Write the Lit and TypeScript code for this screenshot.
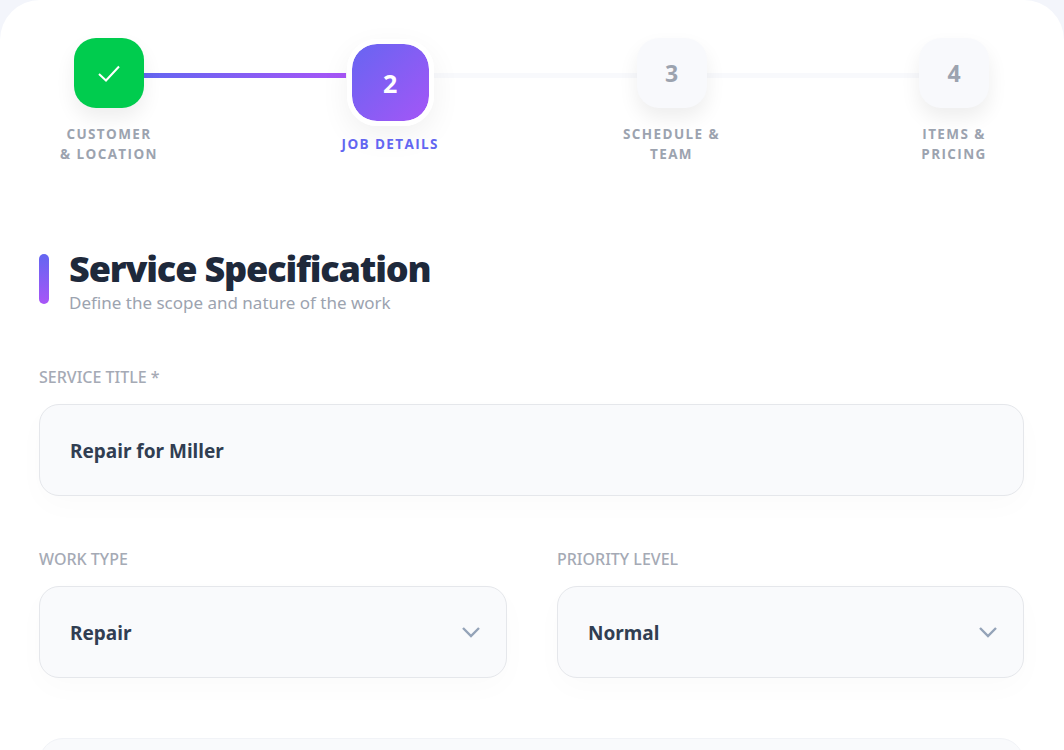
import { html, css, LitElement } from "lit";
import { customElement } from "lit/decorators.js";

const steps = [
  { label: ["Customer", "& Location"], state: "done", num: "" },
  { label: ["Job Details"], state: "active", num: "2" },
  { label: ["Schedule &", "Team"], state: "", num: "3" },
  { label: ["Items &", "Pricing"], state: "", num: "4" },
];

@customElement("app-root")
export class AppRoot extends LitElement {
  static styles = css`
    :host {
      display: block;
      height: 750px;
      overflow: hidden;
      background: #f3f5fb;
      font-family: "Noto Sans", sans-serif;
    }
    .card {
      background: #fff;
      border-radius: 40px 40px 0 0;
      height: 750px;
      box-sizing: border-box;
      padding: 38px 40px 0 39px;
    }

    /* stepper */
    .stepper {
      position: relative;
      display: flex;
      gap: 183.25px;
      margin: 0 21px;
      font-family: "Open Sans", sans-serif;
    }
    .track {
      position: absolute;
      left: 49px;
      right: 49px;
      top: 35px;
      height: 5px;
      background: #f8f9fc;
    }
    .progress {
      position: absolute;
      left: 84px;
      width: 202px;
      top: 35px;
      height: 5px;
      background: linear-gradient(90deg, #6366f1, #a855f7);
    }
    .step {
      position: relative;
      width: 98px;
      display: flex;
      flex-direction: column;
      align-items: center;
    }
    .step:last-child {
      margin-left: 1.25px;
    }
    .dot {
      width: 70px;
      height: 70px;
      border-radius: 22px;
      background: #f8f9fc;
      color: #9ca3af;
      font-size: 23px;
      font-weight: 700;
      display: flex;
      align-items: center;
      justify-content: center;
      box-shadow: 0 10px 20px rgba(0, 0, 0, 0.07);
    }
    .done .dot {
      background: #00cc4e;
    }
    .active .dot {
      width: 77px;
      height: 77px;
      margin-top: 1px;
      border: 5.5px solid #fff;
      border-radius: 30px;
      background: linear-gradient(135deg, #6366f1, #a855f7);
      background-origin: border-box;
      background-clip: padding-box;
      color: #fff;
      font-size: 25px;
      box-shadow: 0 10px 30px rgba(0, 0, 0, 0.06);
    }
    .step-label {
      margin-top: 16px;
      font-size: 13.5px;
      line-height: 20px;
      font-weight: 700;
      letter-spacing: 1.4px;
      text-transform: uppercase;
      text-align: center;
      white-space: nowrap;
      color: #9ca3af;
    }
    .active .step-label {
      margin-top: 8px;
      color: #6366f1;
    }

    /* section header */
    .section {
      display: flex;
      align-items: flex-start;
      gap: 20px;
      margin-top: 85px;
    }
    .bar {
      width: 10px;
      height: 50px;
      margin-top: 5px;
      border-radius: 5px;
      background: linear-gradient(180deg, #6366f1, #a855f7);
    }
    h2 {
      margin: 0;
      font-family: "Open Sans", sans-serif;
      font-size: 36px;
      line-height: 40px;
      font-weight: 800;
      letter-spacing: -1.15px;
      color: #1e293b;
    }
    .sub {
      margin-top: 2px;
      font-size: 17px;
      line-height: 24px;
      color: #9ca3af;
    }

    /* fields */
    .field-label {
      font-size: 16px;
      line-height: 20px;
      font-weight: 500;
      color: #a5aab5;
      text-transform: uppercase;
      margin-bottom: 17px;
    }
    .box {
      height: 92px;
      box-sizing: border-box;
      display: flex;
      align-items: center;
      justify-content: space-between;
      padding: 0 25px 0 30px;
      background: #f9fafc;
      border: 1px solid #e5e7eb;
      border-radius: 20px;
      font-size: 19px;
      line-height: 28px;
      font-weight: 700;
      color: #313e52;
      box-shadow: 0 10px 30px rgba(0, 0, 0, 0.02);
    }
    .value {
      padding-top: 2px;
    }
    .first {
      margin-top: 52px;
    }
    .row {
      display: grid;
      grid-template-columns: 468px 467px;
      gap: 50px;
      margin-top: 53px;
    }
    .next {
      height: 60px;
      margin-top: 60px;
      background: #f9fafc;
      border: 1px solid #f1f3f7;
      border-radius: 24px;
    }
    .chevron {
      width: 20px;
      height: 12px;
      fill: none;
      stroke: #94a3b8;
      stroke-width: 2.4;
    }
  `;

  renderChevron() {
    return html`<svg class="chevron" viewBox="0 0 20 12">
      <path d="M2 2l8 8 8-8"></path>
    </svg>`;
  }

  render() {
    return html`
      <div class="card">
        <div class="stepper">
          <div class="track"></div>
          <div class="progress"></div>
          ${steps.map(
            (s) => html`
              <div class="step ${s.state}">
                <div class="dot">
                  ${s.state === "done"
                    ? html`<svg width="24" height="24" viewBox="0 0 24 24" fill="none" stroke="#fff" stroke-width="2">
                        <path d="M2 13l7 6.5L22 5.5"></path>
                      </svg>`
                    : s.num}
                </div>
                <div class="step-label">${s.label.map((l) => html`<div>${l}</div>`)}</div>
              </div>
            `
          )}
        </div>

        <div class="section">
          <div class="bar"></div>
          <div>
            <h2>Service Specification</h2>
            <div class="sub">Define the scope and nature of the work</div>
          </div>
        </div>

        <div class="first">
          <div class="field-label">Service Title *</div>
          <div class="box"><span class="value">Repair for Miller</span></div>
        </div>

        <div class="row">
          <div>
            <div class="field-label">Work Type</div>
            <div class="box"><span class="value">Repair</span> ${this.renderChevron()}</div>
          </div>
          <div>
            <div class="field-label">Priority Level</div>
            <div class="box"><span class="value">Normal</span> ${this.renderChevron()}</div>
          </div>
        </div>

        <div class="next"></div>
      </div>
    `;
  }
}
